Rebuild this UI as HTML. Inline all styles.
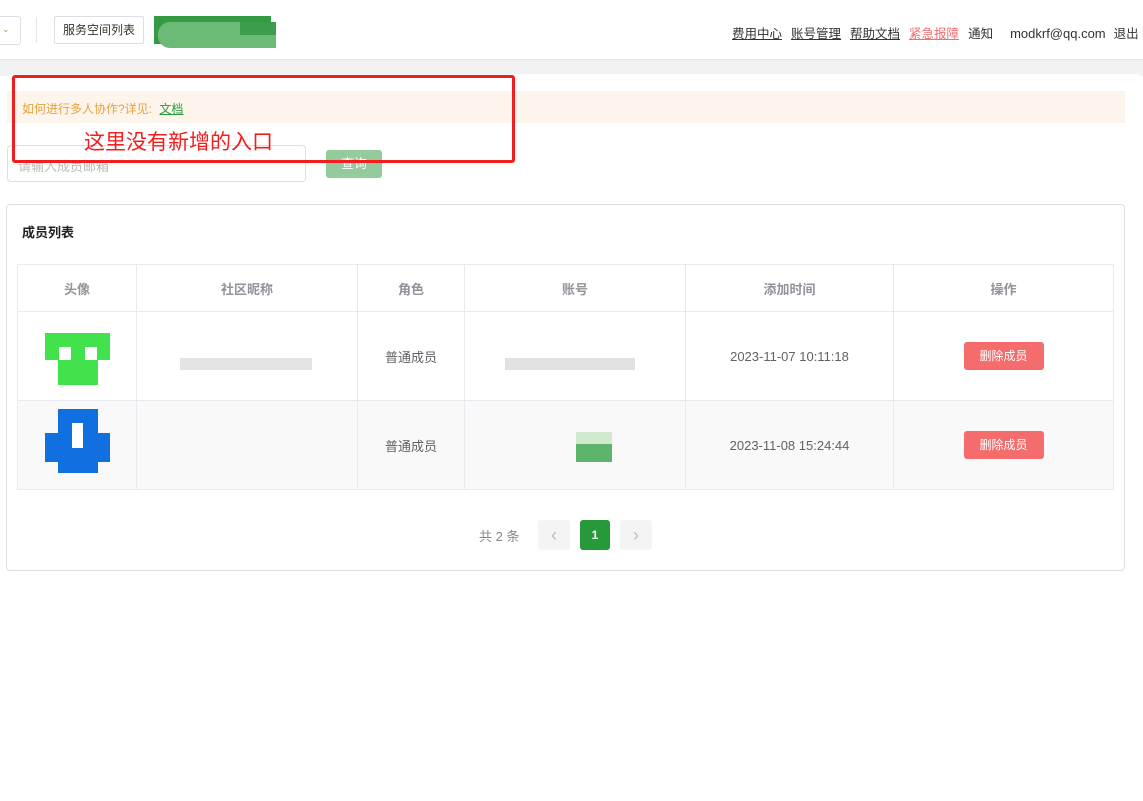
<!DOCTYPE html>
<html><head><meta charset="utf-8"><style>
*{margin:0;padding:0;box-sizing:border-box}
body{width:1143px;height:801px;background:#fff;font-family:"Liberation Sans","Noto Sans CJK SC",sans-serif;position:relative;overflow:hidden;font-size:13px;color:#606266}
.a{position:absolute}
.nav a{color:#333;text-decoration:underline;margin-right:9px}
td,th{border:1px solid #e8eaf0;text-align:center;font-size:13px}
th{color:#909399;font-weight:bold;height:47px}
</style></head><body>
<!-- header -->
<div class="a" style="left:-2px;top:16px;width:23px;height:29px;border:1px solid #dcdfe6;border-left:none;border-radius:0 3px 3px 0"></div>
<div class="a" style="left:2px;top:24px;font-size:9px;color:#999">&#8964;</div>
<div class="a" style="left:36px;top:17px;width:1px;height:26px;background:#e4e4e4"></div>
<div class="a" style="left:54px;top:16px;width:90px;height:28px;border:1px solid #dcdfe6;border-radius:2px;font-size:12px;line-height:26px;text-align:center;color:#333">服务空间列表</div>
<div class="a" style="left:154px;top:16px;width:117px;height:28px;background:#349a44"></div>
<div class="a" style="left:158px;top:22px;width:118px;height:26px;background:#6cba78;border-radius:12px 0 0 12px"></div>
<div class="a" style="left:240px;top:22px;width:36px;height:13px;background:#3d9d4c"></div>
<div class="a nav" style="left:732px;top:23px;font-size:12.5px;color:#333"><a>费用中心</a><a>账号管理</a><a>帮助文档</a><a style="color:#f56c6c">紧急报障</a><span>通知</span><span style="margin-left:17px;font-size:13px">modkrf@qq.com</span><span style="margin-left:8px">退出</span></div>
<div class="a" style="left:0;top:59px;width:1143px;height:17px;background:#f2f2f2;border-top:1px solid #e6e6e6"></div>
<div class="a" style="left:7px;top:74px;width:1134px;height:727px;background:#fff;border-radius:4px"></div>
<!-- notice -->
<div class="a" style="left:7px;top:91px;width:1118px;height:32px;background:#fdf5ec"></div>
<div class="a" style="left:22px;top:100px;font-size:12px;color:#e6a23c">如何进行多人协作?详见: <span style="color:#269a3b;text-decoration:underline;margin-left:4px">文档</span></div>
<div class="a" style="left:7px;top:145px;width:299px;height:37px;border:1px solid #dcdfe6;border-radius:4px;color:#bbb;padding:10px 10px;font-size:13px">请输入成员邮箱</div>
<div class="a" style="left:326px;top:150px;width:56px;height:28px;background:#93cb9c;border-radius:3px;color:#fff;text-align:center;line-height:28px">查询</div>
<div class="a" style="left:12px;top:75px;width:503px;height:88px;border:3px solid #f21d1d;border-radius:3px"></div>
<div class="a" style="left:84px;top:126px;font-size:21px;color:#f21d1d">这里没有新增的入口</div>
<!-- card -->
<div class="a" style="left:6px;top:204px;width:1119px;height:367px;border:1px solid #dcdfe6;border-radius:4px"></div>
<div class="a" style="left:22px;top:222px;font-weight:bold;font-size:13px;color:#222">成员列表</div>
<table class="a" style="left:17px;top:264px;width:1097px;border-collapse:collapse;color:#606266">
<tr><th style="width:119px">头像</th><th style="width:221px">社区昵称</th><th style="width:107px">角色</th><th style="width:221px">账号</th><th style="width:208px">添加时间</th><th>操作</th></tr>
<tr style="height:89px"><td></td><td></td><td>普通成员</td><td></td><td>2023-11-07 10:11:18</td><td><span style="display:inline-block;width:80px;height:28px;line-height:28px;background:#f56c6c;color:#fff;border-radius:3px;font-size:12px">删除成员</span></td></tr>
<tr style="height:89px;background:#f9f9f9"><td></td><td></td><td>普通成员</td><td></td><td>2023-11-08 15:24:44</td><td><span style="display:inline-block;width:80px;height:28px;line-height:28px;background:#f56c6c;color:#fff;border-radius:3px;font-size:12px">删除成员</span></td></tr>
</table>
<!-- avatars -->
<div class="a" style="left:45px;top:333px;width:65px;height:27px;background:#42e24c"></div>
<div class="a" style="left:58px;top:360px;width:40px;height:25px;background:#42e24c"></div>
<div class="a" style="left:59px;top:347px;width:12px;height:13px;background:#fff"></div>
<div class="a" style="left:85px;top:347px;width:12px;height:13px;background:#fff"></div>
<div class="a" style="left:58px;top:409px;width:40px;height:64px;background:#1170e0"></div>
<div class="a" style="left:45px;top:433px;width:65px;height:29px;background:#1170e0"></div>
<div class="a" style="left:72px;top:423px;width:11px;height:25px;background:#fff"></div>
<!-- blur bits -->
<div class="a" style="left:180px;top:358px;width:132px;height:12px;background:#d9d9dc;opacity:.7"></div>
<div class="a" style="left:505px;top:358px;width:130px;height:12px;background:#d4d3d6;opacity:.7"></div>
<div class="a" style="left:576px;top:432px;width:36px;height:30px;background:#5fb46c"></div>
<div class="a" style="left:576px;top:432px;width:36px;height:12px;background:#d1eace"></div>
<!-- pagination -->
<div class="a" style="left:479px;top:526px;color:#888;font-size:13px">共 2 条</div>
<div class="a" style="left:538px;top:520px;width:32px;height:30px;background:#f4f4f5;border-radius:3px;color:#bbb;text-align:center;line-height:30px;font-size:18px">&lsaquo;</div>
<div class="a" style="left:580px;top:520px;width:30px;height:30px;background:#269a3b;border-radius:3px;color:#fff;text-align:center;line-height:30px;font-weight:bold;font-size:12px">1</div>
<div class="a" style="left:620px;top:520px;width:32px;height:30px;background:#f4f4f5;border-radius:3px;color:#bbb;text-align:center;line-height:30px;font-size:18px">&rsaquo;</div>
</body></html>
